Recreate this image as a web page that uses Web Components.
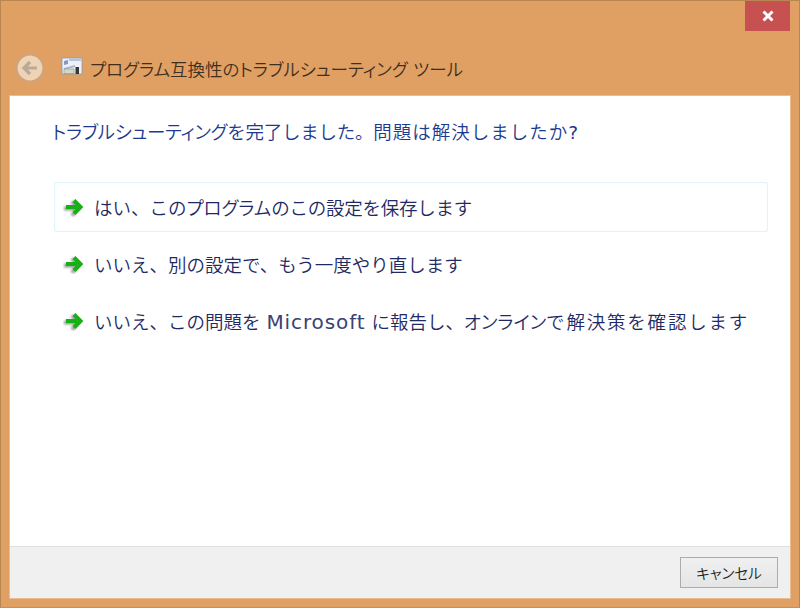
<!DOCTYPE html>
<html lang="ja">
<head>
<meta charset="utf-8">
<title>プログラム互換性のトラブルシューティング ツール</title>
<style>
html, body { margin: 0; padding: 0; height: 100%; }
body { font-family: "DejaVu Sans", "Noto Sans CJK JP", sans-serif; overflow: hidden; }
.kana { font-feature-settings: "palt"; }
.wide { letter-spacing: 1px; }
.wider { letter-spacing: 1.8px; }
.tight { letter-spacing: -0.25px; }
.latin { font-weight: 400; }
.ms { font-size: 20px; letter-spacing: 0.9px; font-weight: 400; color: #3a4272; }
</style>
</head>
<body>
<trouble-dialog>
    <span slot="title">プログラム互換性のトラブルシューティング ツール</span>
    <span slot="heading"><span class="tight"><span class="kana">トラブルシューティング</span>を完了しました。</span><span class="wide">問題は解決しましたか<span class="latin">?</span></span></span>
    <command-link selected>はい、この<span class="kana">プログラム</span><span class="tight">のこの設定を保存します</span></command-link>
    <command-link>いいえ、別の設定で、もう一度やり直します</command-link>
    <command-link>いいえ、この問題を <span class="ms">Microsoft</span> に報告し、<span class="kana">オンライン</span><span class="wider">で解決策を確認します</span></command-link>
</trouble-dialog>

<script>
class TroubleDialog extends HTMLElement {
    constructor() {
        super();
        this.attachShadow({mode: 'open'});
        this.shadowRoot.innerHTML = `
            <style>
                :host {
                    display: flex;
                    flex-direction: column;
                    box-sizing: border-box;
                    width: 800px;
                    height: 608px;
                    background: #e0a063;
                    border: 1px solid #b98650;
                    border-bottom-color: #c4905a;
                    padding: 0 9px 9px 9px;
                }
                #caption {
                    display: flex;
                    justify-content: flex-end;
                    height: 50px;
                    flex: none;
                }
                #close {
                    width: 45px;
                    height: 30px;
                    background: #c75050;
                    display: flex;
                    align-items: center;
                    justify-content: center;
                }
                #nav {
                    display: flex;
                    align-items: center;
                    height: 36px;
                    flex: none;
                    padding-bottom: 10px;
                    margin-top: -1px;
                    padding-left: 5px;
                }
                #back { flex: none; margin-right: 16px; }
                #app { flex: none; margin-right: 7px; margin-top: -3px; }
                #title {
                    font-size: 17.5px;
                    font-weight: 350;
                    color: #3f2f1e;
                    white-space: pre;
                    font-feature-settings: "palt";
                }
                #panel {
                    flex: 1;
                    background: #fff;
                    display: flex;
                    flex-direction: column;
                    min-height: 0;
                    box-shadow: 0 0 0 1px rgba(255,240,225,.35);
                }
                #heading {
                    font-size: 18.5px;
                    font-weight: 350;
                    color: #1c3a8f;
                    padding: 23px 0 0 42px;
                    height: 64px;
                    box-sizing: border-box;
                    line-height: 28px;
                    white-space: nowrap;
                }
                #links {
                    flex: 1;
                    display: flex;
                    flex-direction: column;
                    padding: 22px 22px 0 44px;
                    gap: 7px;
                }
                #footer {
                    flex: none;
                    height: 52px;
                    box-sizing: border-box;
                    background: #f0f0f0;
                    border-top: 1px solid #dfdfdf;
                    display: flex;
                    justify-content: flex-end;
                    align-items: flex-start;
                    padding: 10px 12px 0 0;
                }
                #cancel {
                    width: 98px;
                    height: 31px;
                    box-sizing: border-box;
                    border: 1px solid #acacac;
                    background: linear-gradient(#f0f0f0, #e5e5e5);
                    font: 350 14.5px "Noto Sans CJK JP", sans-serif;
                    color: #222;
                    padding: 0;
                    font-feature-settings: "palt";
                }
            </style>
            <div id="caption">
                <div id="close">
                    <svg width="14" height="12" viewBox="0 0 14 12"><path d="M2.5 1.5 L11.5 10.5 M11.5 1.5 L2.5 10.5" stroke="#fff" stroke-width="3" fill="none"/></svg>
                </div>
            </div>
            <div id="nav">
                <svg id="back" width="30" height="30" viewBox="0 0 30 30">
                    <circle cx="15" cy="15" r="13.2" fill="#efd3b5" stroke="#c9a582" stroke-width="1.6"/>
                    <path d="M22 15 H9.5 M15 9 L9 15 L15 21" fill="none" stroke="#b9a999" stroke-width="3.2"/>
                </svg>
                <svg id="app" width="22" height="20" viewBox="0 0 22 20">
                    <rect x="1" y="1" width="20" height="16" fill="#eef0f5" stroke="#8d97ab" stroke-width=".8"/>
                    <rect x="8" y="1.5" width="12.5" height="2.5" fill="#b4c3de"/>
                    <path d="M3 4 L7 3 L7 7 L3 8 Z" fill="#7f9ac8"/>
                    <path d="M3 11 L14 8 L14 10 L3 13 Z" fill="#a9b6cf"/>
                    <rect x="3" y="12" width="10" height="4.5" fill="#d3d8c8" stroke="#8a9080" stroke-width=".6"/>
                    <rect x="14.5" y="10" width="3.5" height="7" fill="#33383d"/>
                </svg>
                <span id="title"><slot name="title"></slot></span>
            </div>
            <div id="panel">
                <div id="heading"><slot name="heading"></slot></div>
                <div id="links"><slot></slot></div>
                <div id="footer"><button id="cancel">キャンセル</button></div>
            </div>
        `;
    }
}

class CommandLink extends HTMLElement {
    constructor() {
        super();
        this.attachShadow({mode: 'open'});
        this.shadowRoot.innerHTML = `
            <style>
                :host {
                    display: flex;
                    align-items: center;
                    box-sizing: border-box;
                    height: 50px;
                    border: 1px solid transparent;
                    border-radius: 2px;
                    padding-left: 8px;
                    font-size: 18.5px;
                    font-weight: 350;
                    color: #1f2a63;
                    white-space: nowrap;
                }
                :host([selected]) {
                    border-color: #dff4fb;
                    box-shadow: inset 0 0 2px #eefafd;
                }
                svg { flex: none; margin-right: 10px; }
            </style>
            <svg width="21" height="20" viewBox="0 0 21 20">
                <defs><filter id="s" x="-30%" y="-30%" width="160%" height="160%"><feGaussianBlur stdDeviation="1.3"/></filter></defs>
                <path d="M1 11.5 H12 M9 4.5 L15.5 11.5 L9 18.5" fill="none" stroke="#999" stroke-width="4" filter="url(#s)"/>
                <path d="M3 10 H14 M11 3.5 L17.5 10 L11 16.5" fill="none" stroke="#16b016" stroke-width="4"/>
            </svg>
            <span><slot></slot></span>
        `;
    }
}

window.customElements.define('trouble-dialog', TroubleDialog);
window.customElements.define('command-link', CommandLink);
</script>
</body>
</html>
